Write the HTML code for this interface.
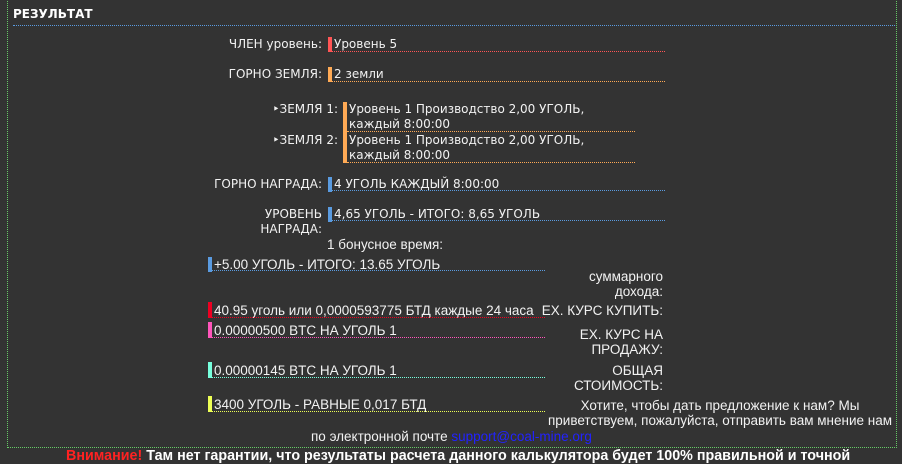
<!DOCTYPE html>
<html><head><meta charset="utf-8"><style>
body{margin:0;width:902px;height:459px;background:#333;overflow:hidden;position:relative;font-family:"DejaVu Sans","Liberation Sans",sans-serif;font-size:12px;color:#f2f2f2}
div{position:absolute;white-space:nowrap;line-height:15px}
.box{left:7px;top:-2px;width:888px;height:448px;border:1px dotted #6c6;}
.r{text-align:right}
.bar{width:4px}
.u{height:0;border-bottom:1px dotted}
.c{font-family:"Liberation Sans",sans-serif;font-size:13.5px}
</style></head><body>
<div class="box"></div>
<div style="left:13px;top:7px;font-weight:bold;font-size:12px;color:#fff">РЕЗУЛЬТАТ</div>
<div class="u" style="left:13px;top:25px;width:882px;border-color:#5a9be0"></div>

<div class="r" style="right:580px;top:37px">ЧЛЕН уровень:</div>
<div class="bar" style="left:328px;top:37px;height:15px;background:#f55"></div>
<div style="left:334px;top:37px">Уровень 5</div>
<div class="u" style="left:332px;top:51px;width:333px;border-color:#f55"></div>

<div class="r" style="right:580px;top:67px">ГОРНО ЗЕМЛЯ:</div>
<div class="bar" style="left:328px;top:67px;height:15px;background:#fa5"></div>
<div style="left:334px;top:67px">2 земли</div>
<div class="u" style="left:332px;top:81px;width:333px;border-color:#fa5"></div>

<div class="r" style="right:564px;top:102px">‣ЗЕМЛЯ 1:</div>
<div class="r" style="right:564px;top:133px">‣ЗЕМЛЯ 2:</div>
<div class="bar" style="left:343px;top:102px;height:61px;background:#fa5"></div>
<div style="left:349px;top:102px">Уровень 1 Производство 2,00 УГОЛЬ,<br>каждый 8:00:00</div>
<div class="u" style="left:347px;top:131px;width:288px;border-color:#fa5"></div>
<div style="left:349px;top:133px">Уровень 1 Производство 2,00 УГОЛЬ,<br>каждый 8:00:00</div>
<div class="u" style="left:347px;top:162px;width:288px;border-color:#fa5"></div>

<div class="r" style="right:580px;top:177px">ГОРНО НАГРАДА:</div>
<div class="bar" style="left:328px;top:177px;height:15px;background:#5a9be0"></div>
<div style="left:334px;top:177px">4 УГОЛЬ КАЖДЫЙ 8:00:00</div>
<div class="u" style="left:332px;top:190px;width:333px;border-color:#5a9be0"></div>

<div class="r" style="right:580px;top:207px">УРОВЕНЬ<br>НАГРАДА:</div>
<div class="bar" style="left:328px;top:207px;height:15px;background:#5a9be0"></div>
<div style="left:334px;top:207px">4,65 УГОЛЬ - ИТОГО: 8,65 УГОЛЬ</div>
<div class="u" style="left:332px;top:220px;width:333px;border-color:#5a9be0"></div>

<div class="c" style="left:327px;top:237px">1 бонусное время:</div>

<div class="bar" style="left:208px;top:257px;height:15px;background:#5a9be0"></div>
<div class="c" style="left:214px;top:257px">+5.00 УГОЛЬ - ИТОГО: 13.65 УГОЛЬ</div>
<div class="u" style="left:212px;top:270px;width:333px;border-color:#5a9be0"></div>

<div class="c r" style="right:239px;top:269px">суммарного<br>дохода:</div>

<div class="bar" style="left:208px;top:302px;height:16px;background:#e02"></div>
<div class="c" style="left:214px;top:303px">40.95 уголь или 0,0000593775 БТД каждые 24 часа</div>
<div class="u" style="left:212px;top:317px;width:333px;border-color:#e02"></div>
<div class="c r" style="right:239px;top:303px">ЕХ. КУРС КУПИТЬ:</div>

<div class="bar" style="left:208px;top:322px;height:16px;background:#f5b"></div>
<div class="c" style="left:214px;top:323px">0.00000500 BTC НА УГОЛЬ 1</div>
<div class="u" style="left:212px;top:337px;width:333px;border-color:#f5b"></div>
<div class="c r" style="right:239px;top:327px">ЕХ. КУРС НА<br>ПРОДАЖУ:</div>

<div class="bar" style="left:208px;top:362px;height:16px;background:#7fd"></div>
<div class="c" style="left:214px;top:363px">0.00000145 BTC НА УГОЛЬ 1</div>
<div class="u" style="left:212px;top:377px;width:333px;border-color:#7fd"></div>
<div class="c r" style="right:239px;top:363px">ОБЩАЯ<br>СТОИМОСТЬ:</div>

<div class="bar" style="left:208px;top:396px;height:16px;background:#ef5"></div>
<div class="c" style="left:214px;top:397px">3400 УГОЛЬ - РАВНЫЕ 0,017 БТД</div>
<div class="u" style="left:212px;top:411px;width:333px;border-color:#ef5"></div>
<div class="c" style="left:546px;top:398px;width:348px;text-align:center">Хотите, чтобы дать предложение к нам? Мы<br>приветствуем, пожалуйста, отправить вам мнение нам</div>
<div class="c" style="left:311px;top:429px">по электронной почте <span style="color:#22f">support@coal-mine.org</span></div>

<div style="left:66px;top:449px;font-weight:bold;font-family:'Liberation Sans',sans-serif;font-size:14.3px;color:#fff"><span style="color:#f22">Внимание!</span> Там нет гарантии, что результаты расчета данного калькулятора будет 100% правильной и точной</div>
</body></html>
